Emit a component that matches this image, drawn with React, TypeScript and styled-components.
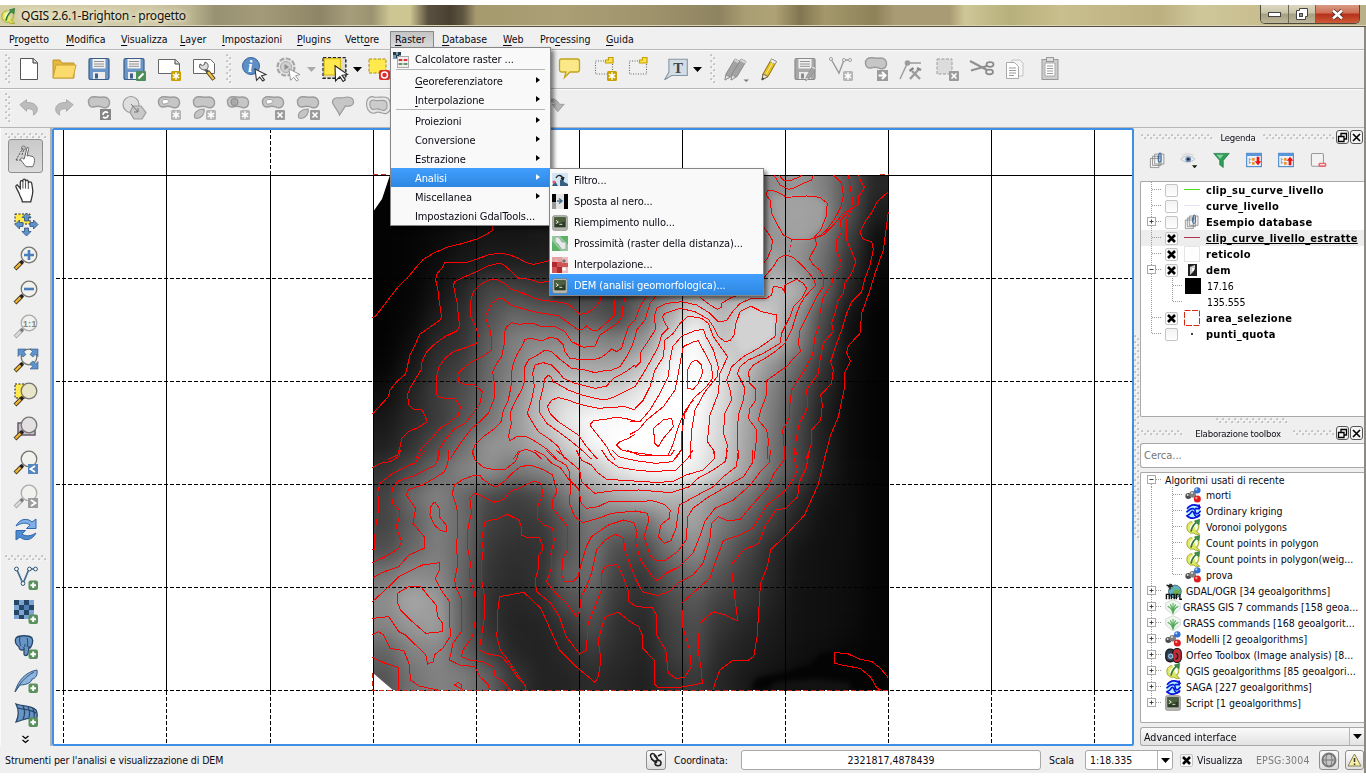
import React from "react";
import styled, { createGlobalStyle, css } from "styled-components";

const Global = createGlobalStyle`
  * { box-sizing: border-box; }
  html, body { margin: 0; padding: 0; background: #fff; overflow: hidden; }
  body { font-family: "DejaVu Sans Condensed", "DejaVu Sans", sans-serif; font-size: 10.5px; color: #0a0a14; }
  svg { display: block; overflow: visible; flex: none; }
`;

/* ---------- window frame ---------- */

const Desktop = styled.div`
  width: 1366px; height: 778px; padding: 5px 0; background: #fff; position: relative; overflow: hidden;
`;
const Window = styled.div`
  height: 768px; display: flex; flex-direction: column; background: #efefef; border-right: 2px solid #8d8a80;
`;
const TitleBar = styled.div`
  height: 22px; flex: none; display: flex; align-items: center; position: relative; padding-left: 0; margin-right: -2px;
  border-bottom: 1px solid #55503f;
  box-shadow: inset 0 -1px 0 #d9d3b8;
  background: linear-gradient(90deg, #d6d0a9 0, #cfc8a4 150px, #bdb691 190px, #989173 215px, #a39b78 260px, #8d8565 320px, #a69e7a 350px, #9a9270 372px, #cdc592 390px, #cdc592 410px, #5a5040 428px, #4a4032 450px, #5f5541 463px, #a5996e 476px, #ab9f76 560px, #9e936b 650px, #8e8460 720px, #a99d73 745px, #aea276 775px, #81764f 800px, #a3976b 825px, #8d8259 875px, #a99c74 895px, #a99c74 950px, #cfc796 965px, #b6b07c 1010px, #c9be8d 1060px, #bcb080 1160px, #cfc79a 1200px, #c9bf90 1250px, #b9b08a 1366px);
`;
const TitleText = styled.span`
  font: 12px "Noto Sans", sans-serif; letter-spacing: -0.24px; color: #111; margin-left: 5px; white-space: pre;
  text-shadow: 0 0 6px #fffbe0, 0 0 6px #fffbe0;
`;
const WinButtons = styled.div`
  margin-left: auto; margin-right: 6px; align-self: flex-start; height: 19px; display: flex;
  border: 1px solid #4d4a3c; border-top: 0; border-radius: 0 0 5px 5px; overflow: hidden;
`;
const WinButton = styled.div<{ $w: number; $close?: boolean }>`
  width: ${(p) => p.$w}px; display: flex; align-items: center; justify-content: center;
  border-right: ${(p) => (p.$close ? "0" : "1px solid #6b6754")};
  background: ${(p) => p.$close
    ? "linear-gradient(#d89a84 0, #cf6f55 45%, #b3301a 50%, #cf5a38 100%)"
    : "linear-gradient(#dcd8c0 0, #c9c4a8 45%, #a59f80 50%, #bdb698 100%)"};
`;
const MenuBar = styled.div`
  height: 22px; flex: none; display: flex; align-items: center; padding: 2px 0 0 2px; background: #f0f0f0;
`;
const MenuTitle = styled.div<{ $w: number; $open?: boolean }>`
  width: ${(p) => p.$w}px; height: 17px; line-height: 16px; white-space: nowrap; padding-left: 7px;
  u { text-underline-offset: 1.5px; }
  ${(p) => p.$open && css`
    width: 44px; margin: 0 ${p.$w - 45}px 0 2px; padding-left: 4px; border: 1px solid #8a8a8a; line-height: 14px;
    background: linear-gradient(#c4c4c4, #dadada);
  `}
`;
const Toolbar = styled.div`
  height: 39px; flex: none; display: flex; align-items: center; padding-left: 5px;
  border-top: 1px solid #b6b6b6; box-shadow: inset 0 1px 0 #fbfbfb; background: #efefef;
`;
const Tool = styled.div<{ $w: number }>`
  width: ${(p) => p.$w}px; display: flex; justify-content: center; flex: none;
`;
const Gap = styled.div<{ $w: number }>`width: ${(p) => p.$w}px; flex: none;`;
const Grip = styled.div<{ $len: number; $row?: boolean }>`
  flex: none;
  width: ${(p) => (p.$row ? p.$len : 6)}px; height: ${(p) => (p.$row ? 6 : p.$len)}px;
  background-image: radial-gradient(circle at 1.3px 1.3px, #c2c2c2 1px, transparent 1.3px), radial-gradient(circle at 4.3px 4.3px, #c2c2c2 1px, transparent 1.3px),
    radial-gradient(circle at 2.2px 2.2px, #fff 1px, transparent 1.3px), radial-gradient(circle at 5.2px 5.2px, #fff 1px, transparent 1.3px);
  background-size: 6px 6px;
`;
const Main = styled.div`
  height: 619px; flex: none; display: flex; border-top: 1px solid #b6b6b6;
`;
const SideBar = styled.div`
  width: 52px; flex: none; display: flex; flex-direction: column; align-items: center; padding-top: 5px;
  border-right: 2px solid #b2b2b2; border-left: 1px solid #fafafa;
`;
const SideTool = styled.div<{ $on?: boolean; $h?: number }>`
  width: 35px; height: ${(p) => p.$h ?? 34}px; display: flex; align-items: center; justify-content: center; flex: none;
  ${(p) => p.$on && css`border: 1px solid #8f8f8f; border-radius: 3px; background: linear-gradient(#c9c9c9, #dcdcdc);`}
`;
const SideBreak = styled.div`height: 14px; flex: none; padding-top: 8px;`;
const Chevrons = styled.div`padding-top: 3px;`;
const MapFrame = styled.div`
  width: 1082px; height: 618px; flex: none; border: 2px solid #3f8fe6; border-radius: 2px; background: #fff; overflow: hidden;
`;
const Splitter = styled.div`
  width: 6px; flex: none; display: flex; align-items: center; justify-content: center;
`;
const Dock = styled.div`
  width: 224px; flex: none; display: flex; flex-direction: column; padding-top: 1px;
`;
const DockTitle = styled.div`
  height: 16px; flex: none; display: flex; align-items: center; font-size: 9.5px; gap: 1px; padding-left: 1px;
`;
const DockName = styled.span<{ $w: number }>`
  width: ${(p) => p.$w}px; text-align: center; white-space: nowrap; letter-spacing: -0.2px;
`;
const DockButton = styled.div`
  width: 13px; height: 14px; border: 1px solid #555; border-radius: 3px; background: #f4f4f4; display: flex; align-items: center; justify-content: center;
`;
const LegendTools = styled.div`
  height: 30px; flex: none; display: flex; align-items: center; margin-bottom: 6px; padding-left: 1px;
`;
const Tree = styled.div<{ $h: number }>`
  height: ${(p) => p.$h}px; flex: none; background: #fff; border: 1px solid #a9a9a9; border-radius: 2px 0 0 2px; border-right: 0; overflow: hidden;
`;
const Row = styled.div<{ $on?: boolean; $h?: number }>`
  height: ${(p) => p.$h ?? 16}px; display: flex; align-items: center; white-space: nowrap; background: ${(p) => (p.$on ? "#ededed" : "transparent")};
`;
const Check = styled.div`
  width: 13px; height: 13px; flex: none; border: 1px solid #c4c4c4; border-radius: 2px; background: linear-gradient(#f2f2f2, #fff);
  display: flex; align-items: center; justify-content: center;
`;
const Symbol = styled.div`
  width: 28px; height: 16px; flex: none; display: flex; align-items: center; justify-content: center;
`;
const LayerName = styled.span<{ $under?: boolean; $plain?: boolean }>`
  font-size: ${(p) => (p.$plain ? 10.5 : 11)}px; font-weight: ${(p) => (p.$plain ? 400 : 700)}; color: #000;
  letter-spacing: ${(p) => (p.$plain ? -0.1 : 0.28)}px;
  padding-left: ${(p) => (p.$plain ? 2 : 0)}px; text-decoration: ${(p) => (p.$under ? "underline" : "none")};
`;
const AlgoIcon = styled.div<{ $w: number }>`
  width: ${(p) => p.$w}px; height: 16px; flex: none;
`;
const DockHandle = styled.div`
  height: 8px; flex: none; display: flex; align-items: center; justify-content: center;
`;
const Search = styled.div`
  height: 25px; flex: none; margin: 2px 0 4px; border: 1px solid #a9a9a9; border-right: 0; border-radius: 3px 0 0 3px; background: #fff; color: #777;
  font-size: 11px; line-height: 23px; padding-left: 3px;
`;
const Combo = styled.div`
  height: 19px; flex: none; margin-top: 4px; border: 1px solid #a9a9a9; border-right: 0; border-radius: 3px 0 0 3px; display: flex; align-items: center; padding-left: 3px;
  background: linear-gradient(#fafafa, #e2e2e2); font-size: 10.6px;
`;
const ComboArrow = styled.div`
  margin-left: auto; width: 15px; height: 100%; border-left: 1px solid #b5b5b5; display: flex; align-items: center; justify-content: center;
`;
const StatusBar = styled.div`
  height: 27px; flex: none; display: flex; align-items: center; padding: 1px 0 0 5px; background: #efefef; letter-spacing: -0.1px;
`;
const StatusText = styled.span<{ $w: number; $dim?: boolean }>`
  width: ${(p) => p.$w}px; flex: none; white-space: nowrap; color: ${(p) => (p.$dim ? "#7c7c7c" : "#0a0a14")};
  letter-spacing: ${(p) => (p.$dim ? 0.15 : -0.1)}px;
`;
const StatusButton = styled.div<{ $w?: number }>`
  width: ${(p) => p.$w ?? 20}px; height: 20px; flex: none; border: 1px solid #8e8e8e; border-radius: 3px; background: linear-gradient(#fbfbfb, #dedede);
  display: flex; align-items: center; justify-content: center;
`;
const Field = styled.div<{ $w: number; $left?: boolean }>`
  width: ${(p) => p.$w}px; height: 20px; flex: none; border: 1px solid #a8a8a8; border-radius: 3px; background: #fff; line-height: 19px; letter-spacing: 0;
  text-align: ${(p) => (p.$left ? "left" : "center")}; padding-left: ${(p) => (p.$left ? 4 : 0)}px; display: ${(p) => (p.$left ? "flex" : "block")};
`;

/* ---------- popup menus ---------- */

const Popup = styled.div<{ $x: number; $y: number; $w: number }>`
  position: absolute; left: ${(p) => p.$x}px; top: ${(p) => p.$y}px; width: ${(p) => p.$w}px;
  border: 1px solid #868686; background: #f9f9f9; box-shadow: 3px 3px 4px rgba(0, 0, 0, 0.5); color: #0a0a14; font-size: 11px; letter-spacing: -0.1px;
`;
const Entry = styled.div<{ $h: number; $on?: boolean }>`
  height: ${(p) => p.$h}px; display: flex; align-items: center; white-space: nowrap; padding: 2px 9px 0 2px;
  ${(p) => p.$on && css`background: linear-gradient(#429fff, #2d87e0); color: #fff;`}
  u { text-underline-offset: 1.5px; }
`;
const EntryIcon = styled.span<{ $w: number }>`width: ${(p) => p.$w}px; height: 16px; flex: none;`;
const EntryArrow = styled.span`margin-left: auto; width: 5px; padding-bottom: 3px;`;
const Rule = styled.div`height: 2px; margin: 0 5px; border-top: 1px solid #b5b5b5;`;

/* ---------- icons ---------- */

const G = "#9b9b9b";
const LG = "#c6c6c6";

const Svg = ({ s = 24, children }: { s?: number; children: React.ReactNode }) => (
  <svg width={s} height={s} viewBox="0 0 24 24" fill="none">{children}</svg>
);
const Star = ({ c = "#c9a000" }: { c?: string }) => (
  <g><rect x="14" y="14" width="10" height="10" rx="1.5" fill={c} />
    <path d="M19 15.3v7.4M15.8 17.1l6.4 3.8M22.2 17.1l-6.4 3.8" stroke="#fff" strokeWidth="1.5" /></g>
);
const Cross = () => (
  <g><rect x="14" y="14" width="10" height="10" rx="1" fill={G} /><path d="M16.5 16.5l5 5M21.5 16.5l-5 5" stroke="#fff" strokeWidth="1.7" /></g>
);
const Plus = () => (
  <g><rect x="14.5" y="14.5" width="9.5" height="9.5" rx="2" fill="#59905b" /><path d="M19.2 16.5v5.6M16.4 19.3h5.6" stroke="#fff" strokeWidth="2" /></g>
);
const Blob = ({ hole }: { hole?: boolean }) => (
  <g><path d="M1.500 6.500C1 2.500 4 .5 8 .8c4 .7 5 .7 8 .2 5-.2 7 3 6.500 6.800-.8 4-5 4.800-8 3C10.500 9.500 9 10.300 6.500 11 3.500 11.300 1.800 9.500 1.500 6.500z" fill={LG} stroke={G} strokeWidth="1.400" />
    {hole && <path d="M5 6c0-2 2-3 4.500-2.500s3.500 2 1 3.500S5 8.500 5 6z" fill="#fff" stroke={G} />}</g>
);
const Drop = () => <path d="M3 22c-2-4.500 2-9 9-9 1 4.500-3 11-9 9z" fill={LG} stroke={G} strokeWidth="1.200" />;
const Arrow = () => <path d="M13 12l11 5.500-4.500 1.300 3 4-1.800 1.300-3-4-3.200 3.200z" fill="#fff" stroke="#333" strokeWidth="1.100" />;
const Pencil = () => (
  <g><path d="M4 23l1-6 8.500-15 5 2.500L10 19.500z" fill="#e8c21e" stroke="#8a6d0a" strokeWidth="1" />
    <path d="M4 23l1-6 5 2.500z" fill="#e9e2c8" stroke="#555" strokeWidth=".8" /><path d="M4 23l.4-2.500 1.800 1z" fill="#333" /><path d="M13.500 2l5 2.500-1.500 2.500-5-2.500z" fill="#ececec" stroke="#999" strokeWidth=".7" /><path d="M8 17l7-12" stroke="#fff" strokeOpacity=".6" /></g>
);
const GreyPencil = ({ x }: { x: number }) => (
  <g transform={`translate(${x} 0)`}><path d="M4 23l1-6 9-15 5 2.500-9 15z" fill="#a3a3a3" stroke="#8a8a8a" strokeWidth="1" />
    <path d="M4 23l1-5 4 2z" fill="#e0e0e0" stroke="#8a8a8a" strokeWidth=".7" /><path d="M14 2l5 2.500-1 2-5-2.500z" fill="#d5d5d5" /></g>
);
const Lens = ({ dim, children, fill = "#f1f1ee" }: { dim?: boolean; children?: React.ReactNode; fill?: string }) => (
  <g>
    <path d="M1 23l7-7" stroke={dim ? "#a5a5a5" : "#403620"} strokeWidth="4" />
    <path d="M1.500 22.500l5-5" stroke={dim ? "#dcdcdc" : "#efb634"} strokeWidth="2.400" />
    <path d="M7 17l2-2" stroke={dim ? "#777" : "#222"} strokeWidth="3.200" />
    <circle cx="15" cy="9" r="7.800" fill={fill} stroke={dim ? "#aaa" : "#75756d"} strokeWidth="1.300" />
    {children}
  </g>
);
const Floppy = ({ c, e }: { c: string; e: string }) => (
  <g><rect x="2" y="1.500" width="20" height="21" rx="1.500" fill={c} stroke={e} strokeWidth="1.200" />
    <rect x="5.500" y="2" width="13" height="9.500" fill="#f1f1f1" /><path d="M7 4.500h10M7 7h10M7 9.300h10" stroke="#888" strokeWidth=".9" />
    <rect x="6" y="15" width="12" height="7" fill="#ececec" /><rect x="8" y="16.500" width="3" height="5" fill={e} /></g>
);
const Qgis = () => (
  <Svg s={16}>
    <path d="M11 4C5 4 2 9 3 14.500S9 22.500 13 21l3 2h6l-5-5" fill="#e3e86a" stroke="#a3a82c" strokeWidth="1.500" />
    <path d="M9.500 17C7 14 9 8 13 8" stroke="#fffff0" strokeWidth="2.400" />
    <path d="M9 19C10 13 13 8 17 5" stroke="#2f7d38" strokeWidth="2.600" /><path d="M14 3l8-2.500-1 9z" fill="#3d9145" stroke="#1d5f25" strokeWidth=".8" />
    <path d="M20 9c1 4 0 8-4 10" stroke="#b6bb3e" strokeWidth="2.400" />
  </Svg>
);
const Saga = () => (
  <Svg s={17}><circle cx="12" cy="12" r="10" fill="#aef4ff" /><path d="M3 8c5-7 14-7 19-1M21 16c-5 7-14 7-19 1" stroke="#0b13e0" strokeWidth="2.600" /><path d="M2 13c4-3 5-6 10-5 4 1 1 6 4 7s4-2 6-4M4 17c5-1 4-6 7-5s1 6 5 7 4-1 5-2M20 2v6h-6" stroke="#0b13e0" strokeWidth="2.300" /></Svg>
);
const Model = () => (
  <Svg s={16}><path d="M4 14l8-4 6-5M12 11l6 7" stroke="#666" strokeWidth="3" /><circle cx="5" cy="13.500" r="4.500" fill="#4d4d4d" /><circle cx="11.500" cy="11" r="5" fill="#7d7d7d" /><circle cx="18.500" cy="5" r="4.800" fill="#2f6fd6" /><circle cx="18.500" cy="18" r="5.300" fill="#e01c1c" /><circle cx="17" cy="3.500" r="1.700" fill="#bcd6ff" /><circle cx="17" cy="16.500" r="1.700" fill="#ff9c9c" /><circle cx="4" cy="12" r="1.500" fill="#ddd" /><circle cx="10.500" cy="9" r="1.600" fill="#ddd" /></Svg>
);
const Gdal = () => (
  <Svg s={17}><circle cx="14" cy="12" r="9" fill="#5cb3c9" stroke="#1c3a3f" /><path d="M8 8c4-4 7 1 5 3s-4 6 2 7 7-4 7-8" fill="#6fae4a" /><path d="M7 1v8M2 3l9 2M4 6l6-4" stroke="#222" strokeWidth="2" /><path d="M2 23v-7h4v7M9 23v-7h4v7M16 23v-7h3M21 16v7h3" stroke="#111" strokeWidth="2" /></Svg>
);
const Grass = () => (
  <Svg s={16}><path d="M1 6l11-5 11 5v9l-11 9L1 15z" fill="#eff6ef" stroke="#c3d0c3" /><path d="M12 22V6M12 22C11 16 8 13 4 11M12 22c1-6 4-9 8-11M12 19c-1-5-2-8-4-11M12 19c1-5 2-8 4-11" stroke="#55ab59" strokeWidth="1.600" /></Svg>
);
const Orfeo = () => (
  <Svg s={17}><rect x="1" y="3" width="13" height="18" rx="6" fill="#2b3b4d" stroke="#111" strokeWidth="1.500" /><rect x="11" y="2" width="12" height="20" rx="6" fill="#c62b38" stroke="#111" strokeWidth="1.500" /><circle cx="8" cy="13" r="4.500" fill="#9fc0dd" stroke="#222" /><circle cx="8" cy="13" r="2" fill="#3b6ea5" /><path d="M15 9c4 0 4 8 0 8" stroke="#222" strokeWidth="2" /></Svg>
);
const Terminal = () => (
  <Svg s={16}><rect x="1" y="1" width="22" height="22" rx="2.500" fill="#b8b9b0" stroke="#777" /><rect x="3.500" y="3.500" width="17" height="15" fill="#2b3b24" /><path d="M3.500 3.500h17v6l-17 5z" fill="#4b5f3f" /><path d="M6 8l3.500 2.500L6 13M11 14h4.500" stroke="#e8f0d8" strokeWidth="1.400" /></Svg>
);
const Pages = ({ s = 16 }: { s?: number }) => (
  <Svg s={s}><path d="M2 9h12v13H2zM5 6h12v13H5zM8 3h13v14H8z" fill="#f4f4f4" stroke="#888" strokeWidth="1.200" /><path d="M13 5v7c0 3 4 3 4 0V3c0-2-3-2-3 0v7" stroke="#37649c" strokeWidth="1.500" /></Svg>
);
const DownTri = ({ c = "#000" }: { c?: string }) => (
  <svg width="9" height="5" viewBox="0 0 9 5"><path d="M0 0h9L4.500 5z" fill={c} /></svg>
);
const Dotted = () => (
  <rect x="2.500" y="4" width="17" height="13" fill="#f0f0f0" stroke="#666" strokeWidth="1.100" strokeDasharray="1 1.500" />
);
const PinMark = () => <path d="M12.500 6V3h3V.5h4.500V6z" fill="#fbe34a" stroke="#c4a000" strokeWidth="1.200" />;

const icons: Record<string, React.ReactNode> = {
  file: <Svg><path d="M3.500 1.500h13l4 4v17h-17z" fill="#fff" stroke="#555" /><path d="M16 1.500v4.500h4.500" stroke="#333" fill="#ddd" /></Svg>,
  folder: <Svg><path d="M1 21V3h7l2 3h12v15z" fill="#e4b93a" stroke="#c0942a" /><path d="M1 21L4 8h20l-3 13z" fill="#fbdb6b" stroke="#caa036" /></Svg>,
  save: <Svg><Floppy c="#6b96c8" e="#3b5d88" /></Svg>,
  saveAs: <Svg><Floppy c="#6b96c8" e="#3b5d88" /><rect x="14" y="14" width="10" height="10" rx="1" fill="#4f8f57" /><path d="M16.500 21.500l5-5" stroke="#fff" strokeWidth="2" /></Svg>,
  composer: <Svg><path d="M1.500 2.500h17l4 4v10h-21z" fill="#fff" stroke="#666" /><path d="M18 2.500V7h4.500" stroke="#444" fill="#ddd" /><Star /></Svg>,
  manager: <Svg><path d="M1.500 2.500h17l4 4v10h-21z" fill="#fff" stroke="#666" /><path d="M12 11l4 4" stroke="#555" strokeWidth="3" /><path d="M8 7l2.500 1.500 2-1L13 5c3 1 4 4 2.500 6.500S9 13 7.500 10z" fill="#ddd" stroke="#555" /><path d="M15.500 14.500l6.500 8" stroke="#4a3b10" strokeWidth="4.200" /><path d="M16 15l5.500 7" stroke="#efc04a" strokeWidth="2.500" /></Svg>,
  info: <Svg><circle cx="9" cy="9" r="8.500" fill="#5d8ec6" stroke="#38659d" /><text x="6" y="14.500" fontFamily="Liberation Serif, serif" fontStyle="italic" fontWeight="700" fontSize="16" fill="#fff">i</text><Arrow /></Svg>,
  gear: <Svg><circle cx="10" cy="10" r="8.500" fill="#e4e4e4" stroke="#a5a5a5" strokeWidth="2.200" strokeDasharray="5 1.600" /><circle cx="10" cy="10" r="5.500" fill="#d0d0d0" stroke="#aaa" /><path d="M8.500 7l4.500 3-4.500 3z" fill="#8d8d8d" /><path d="M13 12l11 5.500-4.500 1.300 3 4-1.800 1.300-3-4-3.200 3.200z" fill="#fff" stroke="#999" /></Svg>,
  select: <Svg s={26}><rect x="1" y="1.500" width="21" height="19" fill="#dcdccf" stroke="#222" strokeWidth="1.300" strokeDasharray="3 1.500" /><rect x="2" y="2.500" width="15" height="15" fill="#ffe94d" stroke="#d9b90f" /><path d="M12 9l11.500 8-5 .8 3 4.200-2 1.500-3-4.500-4 4z" fill="#fff" stroke="#222" /></Svg>,
  deselect: <Svg><rect x="1" y="2" width="17" height="14" fill="#ffe94d" stroke="#a88d0c" strokeDasharray="3 1.500" /><rect x="11" y="13" width="11" height="10" rx="2" fill="#dd2c2c" /><circle cx="16.500" cy="18" r="3" stroke="#fff" strokeWidth="1.500" /></Svg>,
  tip: <Svg><path d="M4 2h16c2 0 2.500 1 2.500 2.500v8c0 2-1 2.500-2.500 2.500h-7l-5.500 5.500L9 15H5C3 15 2.500 14 2.500 12.500v-8C2.500 3 3 2 4 2z" fill="#fbe989" stroke="#c4a21a" strokeWidth="1.300" /></Svg>,
  newMark: <Svg><Dotted /><PinMark /><Star /></Svg>,
  marks: <Svg><Dotted /><PinMark /></Svg>,
  label: <Svg s={26}><path d="M4.500 3h17v15H7L.5 22l4-7z" fill="#d3dde6" stroke="#8595a3" /><text x="8.500" y="15.500" fontFamily="Liberation Serif, serif" fontWeight="700" fontSize="13.500" fill="#444">T</text></Svg>,
  pencils: <Svg><GreyPencil x={-3} /><GreyPencil x={3} /><path d="M19.500 22.500h5.500L22.200 25z" fill="#777" /></Svg>,
  pencil: <Svg><Pencil /></Svg>,
  saveEdit: <Svg><Floppy c="#a8a8a8" e="#8a8a8a" /><g transform="translate(10 8) scale(.68)"><GreyPencil x={0} /></g></Svg>,
  addNode: <Svg><path d="M2 2l8 14L15 3h6" stroke={G} strokeWidth="1.400" /><circle cx="2" cy="2" r="1.500" fill="#fff" stroke={G} /><circle cx="15" cy="3" r="1.500" fill="#fff" stroke={G} /><circle cx="21" cy="3" r="1.500" fill="#fff" stroke={G} /><Star c="#b5b5b5" /></Svg>,
  moveFeat: <Svg><Blob /><rect x="13" y="13" width="11" height="11" fill={G} /><path d="M14.500 18.500h6M18 15l3.500 3.500L18 22" stroke="#fff" strokeWidth="2" /></Svg>,
  nodeTool: <Svg><path d="M1 22L8.500 6H22" stroke={G} strokeWidth="1.400" /><circle cx="8.500" cy="6" r="2.800" fill={G} /><path d="M13 14l8 8M20 12l-9 10" stroke={G} strokeWidth="2.400" /><path d="M10.500 14l4-3M18 11l4 2" stroke="#8a8a8a" strokeWidth="2.400" /></Svg>,
  delSel: <Svg><rect x="2" y="2" width="15" height="15" fill="#dcdcdc" stroke={G} strokeDasharray="3 1.500" /><Cross /></Svg>,
  cut: <Svg><path d="M0 4l17 9M1 13.500l16-4.500" stroke="#909090" strokeWidth="2" /><ellipse cx="20" cy="7.500" rx="3.500" ry="2.300" stroke="#8a8a8a" strokeWidth="1.700" /><ellipse cx="19.500" cy="15" rx="3.500" ry="2.300" stroke="#8a8a8a" strokeWidth="1.700" /></Svg>,
  copy: <Svg><path d="M9 3h8l3 3v13H9z" fill="#f4f4f4" stroke="#c4c4c4" /><path d="M3.500 5.500h8l4 4v12h-12z" fill="#fff" stroke="#aaa" /><path d="M6 11h7M6 13.500h7M6 16h7M6 18.500h5" stroke="#999" /></Svg>,
  paste: <Svg><rect x="4" y="2.500" width="16" height="20" fill="#ccc" stroke="#999" /><path d="M7 6h10v13H7z" fill="#fff" stroke="#aaa" /><rect x="8.500" y=".5" width="7" height="4" fill="#ddd" stroke="#999" /><path d="M9 9h6M9 11.500h6M9 14h6M9 16.500h6" stroke="#999" /></Svg>,
  undo: <Svg s={20}><path d="M1 8l8-6v3.500c8-.5 13 3 13 8 0 3-2 6-5 7 2-6-2-8-8-7.500V16z" fill="#bcbcbc" stroke="#a2a2a2" /></Svg>,
  redo: <Svg s={20}><path d="M23 8l-8-6v3.500C7 5 2 8.500 2 13.500c0 3 2 6 5 7-2-6 2-8 8-7.500V16z" fill="#bcbcbc" stroke="#a2a2a2" /></Svg>,
  rotate: <Svg><Blob /><rect x="13" y="13" width="11" height="11" fill="#858585" /><path d="M21 17c-2-2-5-1-5 2M16 21c3 2 5 0 5-2" stroke="#fff" strokeWidth="1.700" /></Svg>,
  simplify: <Svg><circle cx="9" cy="8.500" r="8" fill="#dedede" stroke={G} strokeWidth="1.200" /><path d="M11 10h8l5 6.500-4 6.500h-8l-4-6.500z" fill="#c9c9c9" stroke={G} strokeWidth="1.200" /><path d="M9 8l7 8M16 12v4h-4" stroke="#777" /></Svg>,
  ring: <Svg><Blob hole /><Star c="#b5b5b5" /></Svg>,
  part: <Svg><Blob /><Drop /><Star c="#b5b5b5" /></Svg>,
  fillRing: <Svg><Blob /><circle cx="8.500" cy="6" r="3.600" fill="#aaa" stroke="#8a8a8a" /><Star c="#b5b5b5" /></Svg>,
  delRing: <Svg><Blob hole /><Cross /></Svg>,
  delPart: <Svg><Blob /><Drop /><Cross /></Svg>,
  reshape: <Svg><path d="M1.500 7C1 3 4 1.500 8 1.800c4 .5 5-.5 8-.8 5-.2 7 2.800 6.500 5.800-.8 3.500-5 3.700-8 3l-6 9.200c-1-3.500-4-6.500-7-12z" fill={LG} stroke={G} strokeWidth="1.200" /></Svg>,
  offset: <Svg s={26}><path d="M1.500 9C1 3 5 .5 9 2c4 1 12-3 14 4 1 6 1 9-3 11-4 1-6-2-9-1-4 2-9 0-9.500-7z" fill="#e5e5e5" stroke={G} /><path d="M4.500 9C4 5 7 4 10 5s9-2 10 2c1 4 0 6-2 7s-5-2-8-1-5 0-5.500-4z" fill="#ccc" stroke={G} /></Svg>,
  rotateSym: <Svg s={22}><path d="M0 9c4-9 13-9 17-1h5l-7 8-6-8h4C10 4 5 4 0 9z" fill="#b5b5b5" stroke="#9c9c9c" /></Svg>,
  touch: <Svg><path d="M8 11l2-6M2 16L9 4M2 16h5" stroke="#555" strokeDasharray="2 1" /><circle cx="9.500" cy="4" r="2" stroke="#777" /><path d="M13 3.500c1.500-.5 2 .5 1.500 2L13 12l2-.5 1.500.7 1.500 0 1.500 1 .7 1c.8 3 0 5.500-1.500 8.500H12c-2-3-4.500-5-5.500-7.500 0-1.700 2-1.700 3.500 0L10.500 14z" fill="#fff" stroke="#666" /></Svg>,
  hand: <Svg s={25}><path d="M6 15L3 9c-1-2 1-3 2-1.500L7 10V4c0-2 2.300-2 2.500 0V2.500C9.500.5 12 .5 12 2.500V3.500c0-2 2.500-2 2.700 0v1.700c0-2 3-1.800 3.300 0L19 12c0 5-1 6-2 11H9c0-3-2-4-3-8z" fill="#fff" stroke="#333" strokeWidth="1.200" /><path d="M9.500 4v6M12 4v6M14.700 5v5.500" stroke="#555" /></Svg>,
  panSel: <Svg><rect x="1" y="2" width="15" height="10" fill="#ffe94d" stroke="#222" strokeDasharray="2 1.500" /><path d="M12.500 1l4.500 4.500h-2.500V9h-4V5.500H8zM12.500 24L8 19.500h2.500V16h4v3.500H17zM1 12.500L5.500 8v2.500H9v4H5.500V17zM24 12.500L19.500 8v2.500H16v4h3.500V17z" fill="#5f93cd" stroke="#2d527f" strokeWidth=".8" /></Svg>,
  zoomIn: <Svg><Lens><path d="M15 4v10M10 9h10" stroke="#4a7fbd" strokeWidth="2.600" /></Lens></Svg>,
  zoomOut: <Svg><Lens><path d="M10 9h10" stroke="#4a7fbd" strokeWidth="2.600" /></Lens></Svg>,
  zoomNative: <Svg><Lens dim><text x="8.800" y="12.500" fontFamily="Liberation Sans, sans-serif" fontWeight="700" fontSize="9.500" fill="#888">1:1</text></Lens></Svg>,
  zoomFull: <Svg><Lens /><path d="M4 1h8l-2.500 2.500L12 6.500 9 9 6.500 6 4 8.500zM24 1h-8l2.500 2.500L16 6.500 19 9l2.500-3L24 8.500zM24 21h-8l2.500-2.500L16 15.500l3-2.500 2.500 3 2.500-2.500z" fill="#5f93cd" stroke="#315981" strokeWidth=".6" /></Svg>,
  zoomSel: <Svg><rect x="1" y="2" width="12" height="14" fill="#ffe94d" stroke="#222" strokeDasharray="2 1.500" /><Lens fill="#e9e5cb" /></Svg>,
  zoomLayer: <Svg><rect x="4" y="7" width="17" height="12" fill="#c9c0cc" stroke="#655b6a" strokeWidth="1.500" /><Lens fill="#e3e0e4" /></Svg>,
  zoomLast: <Svg><Lens /><rect x="14" y="14" width="10" height="10" fill="#5686be" /><path d="M21 16l-4.500 3L21 22" stroke="#fff" strokeWidth="1.800" /></Svg>,
  zoomNext: <Svg><Lens dim /><rect x="14" y="14" width="10" height="10" fill="#9c9c9c" /><path d="M17 16l4.500 3L17 22" stroke="#fff" strokeWidth="1.800" /></Svg>,
  refresh: <Svg><path d="M2 8C6 0 14 0 18 4l4-3v9.500h-9.500L16 7C12 4 7 5 2 8z" fill="#7fb0e6" stroke="#2f68ab" /><path d="M22 15c-4 8-12 8-16 4l-4 3v-9.500h9.500L8 16c4 3 9 2 14-1z" fill="#4e8bd0" stroke="#2f68ab" /></Svg>,
  addVector: <Svg><path d="M2.500 3L9 17.500 15 3h7" stroke="#456c92" strokeWidth="1.700" />{[[2.5, 3], [9, 17.5], [15.5, 3], [21.5, 3]].map(([x, y]) => <circle key={`${x}`} cx={x} cy={y} r="1.900" fill="#fff" stroke="#2d4f70" />)}<Plus /></Svg>,
  addRaster: <Svg><rect width="20" height="19" fill="#7aa5d2" /><path d="M0 0h5v5H0zM10 0h5v5h-5zM5 5h5v5H5zM15 5h5v5h-5zM0 10h5v5H0zM10 10h5v5h-5zM5 15h5v4H5z" fill="#274666" /><path d="M10 5h5v5h-5z" fill="#4f7fb5" /><Plus /></Svg>,
  addPg: <Svg><path d="M2 3c3-3 13-3 16 0 2 4-1 9-2 10l-1-1-1 7c-1 2-4 2-4 0v-5c-2 2-5 1-5-2C2 10 0 6 2 3z" fill="#6795c8" stroke="#274666" strokeWidth="1.300" /><path d="M6 2c-1 4 0 7 1 9M13 3c1 4 1 6 0 9M9 13c1-1 2-1 2-4" stroke="#274666" /><Plus /></Svg>,
  addLite: <Svg><path d="M1 23C4 11 12 3 23 1c1 5-2 9-5 9 0 3-5 6-12 6z" fill="#8db4de" stroke="#33587f" /><path d="M1 23C6 14 11 8 20 3" stroke="#33587f" /><Plus /></Svg>,
  addMssql: <Svg><path d="M2 1c8 3 14 1 20 6 2 4 1 8 0 10C15 13 9 17 2 19c3-6 3-12 0-18z" fill="#6795c8" stroke="#274666" strokeWidth="1.300" /><path d="M9 3c2 4 2 9 0 13M14 4c2 4 2 7 1 10.500M18.500 5c2 3 2 6 1.500 10M4 5c8 2 12 1 18 5" stroke="#274666" strokeWidth="1.200" /><Plus /></Svg>,
};

/* ---------- terrain map ---------- */

const shade = [
  [3, 5, 8, 10, 12, 15, 20, 25, 35, 50, 70, 90, 110, 125, 135, 140, 152, 128, 85, 38],
  [3, 5, 8, 12, 15, 18, 22, 28, 38, 55, 75, 95, 115, 130, 140, 150, 163, 138, 78, 28],
  [3, 5, 10, 18, 22, 22, 25, 32, 45, 60, 80, 100, 120, 135, 145, 150, 152, 118, 62, 14],
  [3, 5, 14, 25, 33, 33, 33, 40, 50, 60, 80, 105, 130, 140, 155, 165, 145, 108, 50, 10],
  [3, 6, 18, 38, 72, 70, 60, 60, 65, 65, 90, 130, 160, 160, 178, 188, 175, 98, 35, 6],
  [3, 8, 28, 48, 82, 105, 98, 92, 88, 72, 112, 172, 228, 182, 203, 200, 145, 74, 18, 4],
  [3, 14, 42, 52, 95, 128, 138, 140, 138, 130, 152, 215, 255, 195, 208, 190, 130, 65, 16, 4],
  [6, 25, 52, 66, 105, 130, 165, 172, 168, 170, 198, 248, 255, 225, 188, 145, 100, 50, 12, 4],
  [14, 36, 62, 78, 108, 142, 185, 215, 212, 212, 235, 255, 255, 222, 172, 128, 82, 38, 11, 4],
  [24, 42, 58, 84, 118, 152, 190, 230, 248, 250, 255, 255, 252, 215, 168, 122, 74, 30, 11, 4],
  [32, 50, 78, 112, 148, 150, 172, 205, 245, 255, 255, 255, 245, 212, 164, 116, 70, 30, 11, 4],
  [52, 78, 108, 132, 142, 118, 130, 158, 190, 225, 245, 250, 238, 204, 162, 114, 72, 30, 12, 5],
  [66, 108, 130, 104, 74, 62, 74, 118, 150, 168, 180, 182, 172, 146, 118, 82, 42, 20, 13, 5],
  [68, 94, 126, 108, 64, 56, 58, 88, 120, 112, 110, 148, 162, 124, 94, 62, 32, 17, 14, 5],
  [78, 104, 126, 104, 56, 48, 50, 84, 114, 78, 74, 116, 142, 104, 72, 42, 22, 16, 14, 5],
  [116, 138, 134, 100, 52, 44, 50, 98, 108, 66, 56, 90, 112, 84, 60, 38, 20, 16, 13, 5],
  [140, 168, 154, 96, 48, 38, 44, 80, 92, 56, 46, 74, 88, 66, 52, 34, 18, 16, 13, 5],
  [132, 152, 158, 96, 50, 35, 36, 52, 78, 48, 40, 64, 78, 52, 38, 28, 18, 16, 12, 5],
  [100, 130, 136, 100, 64, 38, 34, 42, 58, 44, 36, 60, 74, 42, 32, 24, 16, 13, 8, 5],
  [84, 115, 130, 124, 96, 54, 34, 36, 44, 38, 32, 48, 58, 38, 25, 18, 12, 16, 14, 10],
];

const northWest = [
  "383,18 383,32 360,45 335,57 295,70 245,82 205,100 175,118 155,140 128,173 100,200 75,232 50,265 30,290 22,293",
  "553,122 530,128 505,133 485,128 460,115 430,103 400,100 370,105 335,117 300,129 260,129 240,127 232,142 215,163 212,180 218,205 222,240 230,290 225,300 190,325 165,342 150,375 135,405 128,435 122,462 95,485 75,510 70,530 50,552 35,568 22,583",
  "553,185 520,187 495,178 460,174 440,155 415,133 400,130 370,138 335,155 300,170 270,184 265,195 270,220 277,250 280,290 284,318 275,333 240,350 205,375 185,395 172,420 168,450 150,480 135,505 127,525 132,555 145,568 172,570 187,605 160,622 130,635 110,655 105,680 98,705 70,718",
  "708,220 708,240 690,262 665,280 645,283 628,268 610,252 590,248 553,243 530,240 500,232 470,218 440,208 420,190 395,178 375,178 345,195 325,215 318,240 318,290 332,320 340,345 335,370 305,382 265,395 240,415 222,440 215,470 213,520 218,530 240,535 270,537 287,560 280,585 250,610 225,625 200,655 170,685 150,718",
  "752,225 748,255 748,285 725,308 700,330 685,333 665,318 650,330 640,330 605,305 580,287 555,283 520,278 480,268 440,256 415,237 400,235 380,250 360,290 375,330 380,360 380,390 355,408 320,425 295,445 277,462 282,485 295,493 330,495 352,515 345,550 325,580 300,610 270,625 240,660 222,690 218,718",
  "782,225 772,265 772,290 760,308 735,325 705,345 690,378 655,382 620,365 600,335 570,320 530,320 505,310 480,310 465,313 440,308 425,320 418,340 418,370 410,410 395,430 383,455 388,490 390,530 370,580 345,605 320,625 290,665 270,695 255,718",
  "810,300 790,320 780,350 770,385 755,395 740,387 725,400 710,412 685,420 640,418 615,415 600,395 595,375 575,355 555,352 530,363 500,355 480,358 470,380 455,405 445,430 440,455 438,500 430,540 415,570 408,605 390,625 355,650 330,675 322,700 330,718",
  "810,350 800,380 785,410 765,440 740,450 720,452 690,458 660,450 620,445 585,418 560,395 540,390 510,410 490,420 480,440 480,480 470,510 450,545 437,575 435,600 440,605 430,650 435,662 455,650 480,648 495,655 520,670 550,690 575,718",
  "810,435 790,450 765,465 745,475 725,498 690,505 660,497 630,490 595,475 580,455 560,435 535,428 510,435 503,460 508,500 500,540 487,580 495,595 520,635 550,655 580,680 600,718",
  "810,500 780,515 750,530 720,540 690,535 650,525 610,510 575,490 563,485 560,472 550,466 540,475 535,500 525,540 525,580 545,610 580,635 620,665 650,690 680,718",
  "810,570 780,560 740,562 700,565 665,558 635,550 610,540 580,533 560,540 547,560 555,580 580,605 610,625 640,645 665,680 690,710 700,718",
  "810,603 780,595 750,592 720,598 685,602 675,615 690,635 710,660 725,680 735,700 750,718",
  "810,643 790,655 765,665 755,675 770,690 800,697 810,698",
  "445,718 460,695 485,688 510,698 530,718",
];
const northEast = [
  "775,125 768,180 760,240 735,310 720,360 695,430 690,490 655,527 650,548 661,573 645,605 642,660 625,740 600,800 583,868",
  "775,65 740,97 725,128 705,155 690,185 698,207 725,215 730,240 720,285 705,325 695,365 665,395 650,430 635,480 620,520 602,575 610,600 605,640 572,675 577,705 572,750 545,780 545,820 528,868",
  "686,15 692,35 703,50 697,65 686,78 685,103 670,110 650,150 648,205 665,245 678,275 665,310 645,340 640,370 625,390 615,430 605,460 610,485 580,520 570,570 565,610 530,660 533,700 530,720 508,760 500,800 490,868",
  "655,15 662,60 668,90 665,115 630,152 635,185 620,210 620,245 632,270 635,285 612,310 605,345 580,380 570,430 570,460 555,500 548,555 520,605 485,660 480,700 480,740 458,780 460,800 465,868",
  "610,15 635,40 640,75 633,110 615,145 590,180 570,197 555,205 560,225 538,265 550,285 570,300 582,325 580,350 560,380 545,410 530,440 510,480 505,520 512,545 490,565 470,590 440,610 410,632 408,680 392,720 385,750 410,780 415,810 412,868",
  "665,115 640,130 615,160 580,195 550,206 520,210 485,208 460,195 440,160 425,130 420,90 408,75 412,63 425,60 450,70 470,82 530,78 570,82 592,100 588,140 572,180 550,206",
  "432,15 450,45 475,58 490,55 520,40 545,30 550,15",
  "447,15 460,30 480,32 510,20 515,15",
  "400,170 415,190 427,210 425,235 412,265 400,280",
  "400,325 430,290 445,265 465,255 490,262 520,290 550,325 557,345 525,380 510,405 500,430 485,480 465,520 435,545 405,565 370,585 355,605 360,640 375,655 378,690 360,715 355,745 380,780 378,820 372,868",
  "210,382 240,405 262,418 275,412 275,400 305,382 330,375",
  "465,365 465,345 500,328 520,340 530,355 515,385 490,410 480,440 455,490 450,520 400,550 355,570 330,590 322,610 345,655 340,690 325,735 322,790 325,868",
  "465,368 455,352 430,350 425,375 410,385 365,385 330,400 308,425 290,452 265,455 240,430 200,405 155,395 110,400 80,415 73,440 77,478 50,520 30,550 33,575 15,593",
  "362,408 395,425 440,435 435,500 385,535 340,560 305,590 290,630 300,660 305,690 285,730 280,790 292,825 288,868",
  "362,408 330,425 318,460 312,495 300,512 285,515 265,500 250,470 235,448 195,425 150,415 105,430 97,440 105,460 115,475 95,495 85,530 60,575 40,610 15,650",
  "15,715 40,690 60,650 75,600 100,560 105,510 130,490 150,460 175,438 215,445 235,460 250,500 293,560 270,610 265,670 240,735 232,815 250,840 255,868",
  "0,755 30,755 60,720 90,670 115,620 120,570 128,530 155,498 195,482 220,478 228,500 250,540 265,590 262,620 225,665 195,720 185,780 180,868",
  "0,793 25,780 50,750 100,710 135,660 145,610 152,570 160,530 190,515 205,512 225,550 245,590 248,625 225,655 190,685 165,730 155,790 155,840 135,868",
  "0,845 30,850 80,857 115,855 130,820 145,770 165,722 190,690",
  "185,575 200,570 215,585 217,610 205,640 190,658 172,655 172,600 185,575",
  "70,775 100,750 125,745 130,770 100,805 85,830 75,820 70,775",
  "15,450 30,410 50,378", "15,500 20,480 45,450 60,400 85,370",
];
const south = [
  "22,53 45,40 75,35 100,20 105,0",
  "180,0 160,20 150,38 110,55 75,75 45,100 38,125 40,180 30,240 28,298 22,300",
  "222,0 218,25 205,48 180,58 150,75 100,92 80,115 85,135 80,160 103,180 100,210 92,230 108,275 100,295 60,320 22,338",
  "248,0 245,40 235,65 205,85 170,105 130,118 122,135 150,175 142,220 175,260 175,295 130,315 100,350 50,368 22,385",
  "318,0 325,30 350,52 385,60 415,58 445,35 455,10 465,0",
  "500,0 530,15 550,38 580,55 600,85 632,118 640,160 655,175 690,170 720,155 800,155 850,152 885,163 903,180 900,205 875,225 868,260 885,280 905,272 920,235 925,200 930,165 975,140 1030,110 1060,80 1098,50 1105,0",
  "205,155 220,175 220,200 240,225 240,245 225,242 205,225 192,195 195,170 205,155",
  "368,720 365,705 340,680 325,650 280,645 250,630 260,580 285,545 285,445 270,415 265,390 275,340 270,290 275,240 272,175 258,130 265,105 290,88 320,77 340,75 345,85 375,107 390,110 415,92 435,70 460,50 490,45 530,60 555,75 560,95 568,125 555,150 555,175 600,230 600,300 585,325 582,375 590,395 615,395 630,380 640,340 655,290 670,260 720,225 765,210 795,218 805,245 800,275 815,330 850,380 865,392 890,370 930,350 970,310 990,260 1005,215 1035,175 1090,150 1140,105 1170,65 1195,40 1200,0",
  "535,0 560,25 595,45 605,65 608,110 605,160 620,200 645,218 690,205 730,190 800,183 835,190 840,210 825,260 845,320 865,333 890,330 925,305 950,270 955,200 970,175 1010,145 1060,115 1120,80 1145,40 1147,0",
  "430,720 410,695 385,680 380,650 350,635 310,630 285,620 290,600 318,560 328,500 325,430 308,380 312,340 303,290 305,230 315,190 310,145 325,130 360,145 385,157 410,148 430,125 465,110 500,93 520,100 527,135 510,170 510,205 530,225 555,235 560,270 550,310 553,350 537,395 560,425 600,465 625,498 635,485 640,440 655,410 670,370 685,300 710,270 740,253 765,265 768,300 785,345 800,385 820,425 865,437 900,425 925,400 970,375 1000,340 1020,270 1025,220 1045,200 1075,213 1110,208 1145,165 1190,115 1210,70 1240,30 1242,0",
  "475,720 475,708 450,680 430,650 405,620 365,612 338,600 352,510 355,450 345,390 345,340 350,300 345,270 355,215 390,207 420,193 455,210 462,230 462,255 480,262 515,262 525,285 525,300 512,320 512,360 503,390 508,425 550,460 575,500 595,560 635,612 655,600 660,520 680,470 700,420 700,370 710,350 745,343 760,370 778,420 780,455 805,470 850,473 862,495 862,555 890,600 897,670 920,685 945,683 965,650 960,600 940,530 937,460 975,425 1020,385 1035,340 1060,272 1110,255 1145,235 1165,205 1190,165 1240,125 1265,90 1280,60 1270,30 1280,0",
  "475,708 450,670 430,640 400,600 390,560 393,480 398,440 470,427 520,475 540,520 575,600 625,650 680,697 690,680 698,630 690,570 710,500 750,487 785,515 810,530 822,560 822,595 855,630 855,700 865,712 930,712 998,700 995,660 985,600 990,520 1030,485 1060,493 1103,513 1095,450 1083,345 1120,300 1165,280 1185,225 1215,180 1245,175 1280,140 1285,95 1305,55 1315,0",
  "1365,0 1355,45 1340,105 1320,150 1300,195 1250,250 1200,300 1190,350 1170,400 1165,480 1160,560 1150,620 1130,633 1085,633 1050,660 1035,700 1030,720",
  "775,0 810,15 880,18 905,15 915,0", "730,0 750,20 800,32 860,40 910,35 935,0", "700,0 720,30 750,52 800,60 850,65 920,60 955,25 970,0",
  "625,0 640,30 670,45 685,65 715,88 860,97 910,95 950,75 1000,60 1035,25 1032,0",
  "565,0 600,30 635,60 640,95 680,130 730,123 810,120 905,128 960,110 985,85 1030,60 1065,35 1072,0",
  "22,455 60,420 100,380 150,355 170,345 220,338 220,360 208,385 225,420 250,455 252,560 230,595 205,615 203,635 185,642 180,615 150,585 120,555 100,545 70,500 22,505",
  "95,430 130,410 165,410 185,435 210,465 215,500 230,520 230,545 180,550 140,515 105,480 95,455 95,430",
  "22,555 40,545 55,555 75,595 115,602 130,640 135,690 160,708 215,720", "22,622 60,640 98,652 100,720",
  "265,705 275,697 285,705 287,717 265,705",
  "1530,722 1515,715 1495,680 1465,655 1425,648 1390,640 1390,607 1430,612 1465,628 1500,635 1525,655 1548,683",
];

const CELL = 25.75;
const gridX = [63.5, 166.5, 270.5, 373.5, 476.5, 579.5, 682.5, 785.5, 888.5, 991.5, 1094.5];
const gridY = [278.5, 381.5, 484.5, 587.5, 690.5];

const Contours = ({ lines, t }: { lines: string[]; t: string }) => (
  <g transform={t}>{lines.map((p, i) => <polyline key={i} points={p} vectorEffect="non-scaling-stroke" />)}</g>
);

const TerrainMap = () => (
  <svg width="1078" height="614" viewBox="54 130 1078 614">
    <defs>
      <filter id="soft" x="-10%" y="-10%" width="120%" height="120%" colorInterpolationFilters="sRGB"><feGaussianBlur stdDeviation="9" /></filter>
      <filter id="slight" colorInterpolationFilters="sRGB"><feGaussianBlur stdDeviation="2.500" /></filter>
      <clipPath id="extent"><rect x="373" y="175" width="516" height="516" /></clipPath>
    </defs>
    <g clipPath="url(#extent)">
      <rect x="373" y="175" width="516" height="516" fill="#111" />
      <g filter="url(#soft)">
        {shade.map((row, r) => row.map((v, c) => {
          const left = c === 0 ? 40 : 0, top = r === 0 ? 40 : 0;
          return <rect key={`${r}-${c}`} x={373 + c * CELL - left} y={175 + r * CELL - top} fill={`rgb(${v},${v},${v})`}
            width={CELL + left + (c === 19 ? 40 : 0.5)} height={CELL + top + (r === 19 ? 40 : 0.5)} />;
        }))}
      </g>
      <g filter="url(#slight)">
        <path d="M752 308l12 4 12 5-2 20-14 9-18 8-8-20 4-16z" fill="#d2d2d2" />
        <path d="M772 197l40-2 14 8-3 24-15 12-18 0-12-14z" fill="#a3a3a3" opacity=".8" />
        <path d="M750 690l6-12 30-6 24-8 10-10 24-4 42 6v34z" fill="#040404" />
        <path d="M766 691l10-9 40-3 34 4v8z" fill="#131313" />
      </g>
      <path d="M373 175h17l-8 24-9 13zM373 673l21 18h-21z" fill="#fff" />
    </g>
    <g stroke="#000" shapeRendering="crispEdges">
      {gridX.map((x) => <path key={x} d={`M${x} ${x === 270.5 ? 175 : 129}V690.500`} />)}
      <path d="M270.500 129V175" strokeDasharray="4 2" />
      {gridX.map((x) => <path key={`low${x}`} d={`M${x} 690.500V746`} strokeDasharray="4 2" />)}
      <path d="M53 175.500H1133" />
      {gridY.map((y) => <path key={y} d={`M56 ${y}H1133`} strokeDasharray="4 2" />)}
    </g>
    <g fill="none" strokeWidth="1" shapeRendering="crispEdges">
      <path d="M393 690.500H888" stroke="#fff" strokeDasharray="3 9" />
      <path d="M372.500 673v17.500h516" stroke="#d42a12" strokeDasharray="5 3" />
      <path d="M373 174.500h16M880 174.500h9" stroke="#d42a12" strokeDasharray="5 3" />
    </g>
    <g fill="none" stroke="#ff0000" strokeWidth="1" shapeRendering="crispEdges">
      <Contours lines={northWest} t="translate(365 220) scale(.33333)" />
      <Contours lines={northEast} t="translate(630 170) scale(.33333)" />
      <Contours lines={south} t="translate(365 450) scale(.33803 .33333)" />
      <path d="M791.500 240l-3 15" strokeDasharray="2 3" />
    </g>
  </svg>
);

/* ---------- data ---------- */

const menus: [string, string, string, number][] = [
  ["P", "r", "ogetto", 57], ["", "M", "odifica", 55], ["", "V", "isualizza", 59], ["", "L", "ayer", 42], ["", "I", "mpostazioni", 75],
  ["", "P", "lugins", 48], ["Vett", "o", "re", 50], ["", "R", "aster", 46], ["", "D", "atabase", 61], ["", "W", "eb", 37], ["Pro", "c", "essing", 66], ["", "G", "uida", 50],
];

type Item = [string, number];
const topRow: Item[] = [
  ["file", 35], ["folder", 35], ["save", 35], ["saveAs", 35], ["composer", 35], ["manager", 35], ["|", 16], ["info", 33], ["gear", 35], ["v-", 12],
  ["select", 35], ["v", 10], ["deselect", 35], [" ", 154], ["tip", 35], ["newMark", 37], ["marks", 31], [" ", 7], ["label", 31], ["v", 10], [" ", 6], ["|", 10],
  ["pencils", 35], ["pencil", 33], ["saveEdit", 38], ["addNode", 34], ["moveFeat", 36], ["nodeTool", 34], ["delSel", 37], ["cut", 33], ["copy", 33], ["paste", 38],
];
const editRow: Item[] = [
  ["undo", 35], ["redo", 35], ["rotate", 35], ["simplify", 35], ["ring", 35], ["part", 35], ["fillRing", 34], ["delRing", 35], ["delPart", 35], ["reshape", 35],
  ["offset", 35], [" ", 145], ["rotateSym", 30],
];
const ToolRow = ({ items }: { items: Item[] }) => (
  <Toolbar>
    <Grip $len={30} />
    {items.map(([k, w], i) =>
      k === " " ? <Gap key={i} $w={w} /> :
      k === "|" ? <Tool key={i} $w={w}><Grip $len={30} /></Tool> :
      <Tool key={i} $w={w}>{k === "v" ? <DownTri /> : k === "v-" ? <DownTri c="#aaa" /> : icons[k]}</Tool>)}
  </Toolbar>
);

const ExBox = ({ x, open }: { x: number; open?: boolean }) => (
  <g><rect x={x - 3.5} y="3.500" width="8" height="8" fill="#fff" stroke="#aaa" /><path d={open ? `M${x - 1.5} 7.500h4` : `M${x - 1.5} 7.500h4M${x + 0.5} 5.500v4`} stroke="#444" /></g>
);
const Branch = ({ w, top = true, bottom = true, box, inner, open, reach }: {
  w: number; top?: boolean; bottom?: boolean; box?: boolean; inner?: "mid" | "end"; open?: boolean; reach?: number;
}) => (
  <svg width={w} height="16" viewBox={`0 0 ${w} 16`}>
    <g stroke="#9a9a9a" strokeDasharray="1 1" shapeRendering="crispEdges">
      <path d={`M10.500 ${top ? 0 : 8}V${bottom ? 16 : 8}`} />
      {inner ? <path d={`M31.500 0V${inner === "mid" ? 16 : 8}M32 7.500H${reach ?? w - 4}`} /> : <path d={`M11 7.500H${reach ?? 20}`} />}
    </g>
    {box && <ExBox x={10} open={open} />}
  </svg>
);
const X = () => <svg width="9" height="9" viewBox="0 0 9 9"><path d="M1 1l7 7M8 1L1 8" stroke="#000" strokeWidth="2.600" /></svg>;
const LineSym = ({ c }: { c: string }) => <svg width="16" height="2"><rect width="16" height="1" fill={c} /></svg>;

type Layer = { name: string; on?: boolean; sym: React.ReactNode; sel?: boolean; box?: boolean; open?: boolean };
const layers: Layer[] = [
  { name: "clip_su_curve_livello", sym: <LineSym c="#49e01a" /> },
  { name: "curve_livello", sym: <LineSym c="#e3e3f5" /> },
  { name: "Esempio database", sym: <Pages />, box: true },
  { name: "clip_curve_livello_estratte", sym: <LineSym c="#b03050" />, on: true, sel: true },
  { name: "reticolo", sym: <svg width="16" height="16"><rect x=".5" y=".5" width="15" height="15" fill="#fff" stroke="#e5e5e5" /></svg>, on: true },
  { name: "dem", sym: <svg width="9" height="12" viewBox="0 0 9 12"><rect width="9" height="12" fill="#222" /><path d="M2 3l2-1 3-1v4L5 8l-3 3z" fill="#ccc" /><path d="M4 4h2v3H4z" fill="#fff" /></svg>, on: true, box: true, open: true },
];
const lowerLayers: Layer[] = [
  { name: "area_selezione", sym: <svg width="16" height="16"><rect x=".5" y=".5" width="15" height="15" fill="#fff" stroke="#d42a12" strokeDasharray="6 1.500" /></svg>, on: true },
  { name: "punti_quota", sym: <svg width="2" height="2"><rect width="2" height="2" fill="#444" /></svg> },
];
const LayerRow = ({ l, last }: { l: Layer; last?: boolean }) => (
  <Row $on={l.sel}>
    <Branch w={24} bottom={!last} box={l.box} open={l.open} />
    <Check>{l.on && <X />}</Check>
    <Symbol>{l.sym}</Symbol>
    <LayerName $under={l.sel}>{l.name}</LayerName>
  </Row>
);

const recent: [React.ReactNode, string][] = [
  [<Model />, "morti"], [<Saga />, "Ordinary kriging"], [<Qgis />, "Voronoi polygons"], [<Qgis />, "Count points in polygon"], [<Qgis />, "Count points in polygon(weig..."], [<Model />, "prova"],
];
const providers: [React.ReactNode, string, number][] = [
  [<Gdal />, "GDAL/OGR [34 geoalgorithms]", 21], [<Grass />, "GRASS GIS 7 commands [158 geoa...", 18], [<Grass />, "GRASS commands [168 geoalgorit...", 18],
  [<Model />, "Modelli [2 geoalgorithms]", 21], [<Orfeo />, "Orfeo Toolbox (Image analysis) [8...", 21], [<Qgis />, "QGIS geoalgorithms [85 geoalgori...", 21],
  [<Saga />, "SAGA [227 geoalgorithms]", 21], [<Terminal />, "Script [1 geoalgorithms]", 21],
];

const FloatBtn = () => <DockButton><svg width="9" height="9" viewBox="0 0 9 9" fill="none" stroke="#000"><path d="M3 3V.5h5.500V6H6" strokeWidth="1.300" /><path d="M.5 3.500H6v5H.5z" strokeWidth="1.300" /></svg></DockButton>;
const CloseBtn = () => <DockButton><svg width="9" height="9" viewBox="0 0 9 9"><path d="M1 1l7 7M8 1L1 8" stroke="#000" strokeWidth="1.600" /></svg></DockButton>;

const Tab = ({ up }: { up?: boolean }) => (
  <Svg s={16}><rect x="1" y="2" width="22" height="20" fill="#e9f1fb" stroke="#3f7cc4" strokeWidth="1.500" /><rect x="1" y="2" width="22" height="4" fill="#5a95da" /><path d="M5 9v9M5 11h3M5 16h3" stroke="#888" /><path d="M9 9h4v4H9zM9 15h4v4H9z" fill="#f0932b" /><path d={up ? "M18 7l5 6h-3v7h-4v-7h-3z" : "M18 20l5-6h-3V7h-4v7h-3z"} fill="#e81212" /></Svg>
);
const legendIcons: React.ReactNode[] = [
  <Pages s={17} />,
  <Svg s={18}><path d="M1 11c5-6 13-6 19 0-6 5-14 5-19 0z" fill="#e8edf2" stroke="#aab4bc" /><circle cx="11" cy="11" r="3.800" fill="#6b8db3" /><circle cx="11" cy="11" r="1.700" fill="#223" /><path d="M3 6c5-3 10-3 15 0" stroke="#c4c4c4" /><path d="M16 19h7l-3.500 4z" fill="#111" /></Svg>,
  <Svg s={17}><path d="M1 2h22l-8.500 10v10l-5-4v-6z" fill="#2f9d58" stroke="#1f7a41" /><path d="M5 4h10l-5 6z" fill="#86d19f" /></Svg>,
  <Tab />, <Tab up />,
  <Svg s={17}><rect x="2" y="2" width="17" height="18" rx="2" fill="#f2f2f2" stroke="#999" strokeWidth="1.500" /><rect x="12" y="15" width="11" height="6" rx="2" fill="#e8636a" /><path d="M14 18h7" stroke="#fff" strokeWidth="1.500" /></Svg>,
];

const sideTop = ["touch", "hand", "panSel", "zoomIn", "zoomOut", "zoomNative", "zoomFull", "zoomSel", "zoomLayer", "zoomLast", "zoomNext", "refresh"];
const sideBottom = ["addVector", "addRaster", "addPg", "addLite", "addMssql"];

const Tri = ({ c = "#000" }: { c?: string }) => <svg width="4" height="6" viewBox="0 0 4 6"><path d="M0 0l4 3-4 3z" fill={c} /></svg>;
const CalcIcon = () => (
  <svg width="17" height="17" viewBox="0 0 17 17"><path d="M0 0h8v7H0z" fill="#7a98ad" /><path d="M0 0h3v3H0zM5 0h3v3H5zM3 3h3v3H3z" fill="#223a4d" /><rect x="4.500" y="4.500" width="11" height="11" fill="#f3ecec" stroke="#aaa" /><path d="M5 8h10M5 12h10" stroke="#999" /><path d="M6 7h3v2H6zM11 7h3v2h-3z" fill="#d33" /><path d="M6 11h3v2H6zM11 11h3v2h-3z" fill="#5a9a6a" /></svg>
);
const subIcons: React.ReactNode[] = [
  <svg width="16" height="15" viewBox="0 0 16 15"><rect width="16" height="13" fill="#d3e6f5" /><path d="M0 13l3-5 3 5zM8 13V7l3-1 1 3 4 2v2z" fill="#35607d" /><path d="M4 5c2-4 6-3 7 1M11 7l-2-2M11 7l1-3" stroke="#222" strokeWidth="1.300" fill="none" /><circle cx="2" cy="9" r="1.500" fill="#e56" /></svg>,
  <svg width="16" height="15" viewBox="0 0 16 15"><rect width="16" height="15" fill="#e3e3e3" /><path d="M0 0h4v8H0zM12 0h4v15h-4z" fill="#000" /><path d="M0 8h4v7H0z" fill="#999" /><path d="M5 7h4M7 4.500L10 7 7 9.500" stroke="#45708f" strokeWidth="1.500" fill="none" /></svg>,
  <Terminal />,
  <svg width="16" height="15" viewBox="0 0 16 15"><rect width="16" height="15" fill="#8fcf93" /><path d="M0 5l9 10H0zM8 0h8v9z" fill="#3f9d4c" opacity=".6" /><path d="M3 1h4l3 5h4v7l-4 1-4-6-3-2z" fill="#e6e9e6" stroke="#9aa" /></svg>,
  <svg width="16" height="16" viewBox="0 0 16 16"><rect width="16" height="16" fill="#cf5557" /><path d="M0 0h10v5H0z" fill="#e0a0a0" /><path d="M0 5h5v5H0zM5 10h5v6H5z" fill="#b02a2d" /><path d="M10 0h6v6h-6zM10 10h6v6h-6z" fill="#eebcbc" /><circle cx="4" cy="3.500" r="1.500" fill="#faa" /><circle cx="12" cy="4" r="1.800" fill="#777" /><circle cx="12" cy="12" r="1.800" fill="#fff" /></svg>,
  <Terminal />,
];
const subEntries = ["Filtro...", "Sposta al nero...", "Riempimento nullo...", "Prossimità (raster della distanza)...", "Interpolazione...", "DEM (analisi geomorfologica)..."];

export default function App() {
  return (
    <Desktop>
      <Global />
      <Window>
        <TitleBar>
          <Qgis />
          <TitleText>QGIS 2.6.1-Brighton - progetto</TitleText>
          <WinButtons>
            <WinButton $w={28}><svg width="13" height="5"><rect x=".5" y=".5" width="12" height="4" fill="#fff" stroke="#444" /></svg></WinButton>
            <WinButton $w={27}><svg width="12" height="12" fill="#fff" stroke="#444"><path d="M3.500.5h8v8h-2v3h-9v-9h3z" /><rect x="3.500" y="5.500" width="3" height="3" fill="#999" /></svg></WinButton>
            <WinButton $w={43} $close><svg width="13" height="11" viewBox="0 0 13 11"><path d="M2 1.500l9 8M11 1.500l-9 8" stroke="#4a2a22" strokeWidth="4.200" /><path d="M2 1.500l9 8M11 1.500l-9 8" stroke="#fff" strokeWidth="2.600" /></svg></WinButton>
          </WinButtons>
        </TitleBar>
        <MenuBar>
          {menus.map(([a, u, b, w]) => <MenuTitle key={a + u + b} $w={w} $open={b === "aster"}>{a}<u>{u}</u>{b}</MenuTitle>)}
        </MenuBar>
        <ToolRow items={topRow} />
        <ToolRow items={editRow} />
        <Main>
          <SideBar>
            <Grip $row $len={42} />
            {sideTop.map((k, i) => <SideTool key={k} $on={i === 0}>{icons[k]}</SideTool>)}
            <SideBreak><Grip $row $len={42} /></SideBreak>
            {sideBottom.map((k) => <SideTool key={k} $h={34.3}>{icons[k]}</SideTool>)}
            <Chevrons><svg width="7" height="9" viewBox="0 0 7 9" fill="none" stroke="#000" strokeWidth="1.300"><path d="M.5 1l3 2.500L6.500 1M.5 5l3 2.500L6.500 5" /></svg></Chevrons>
          </SideBar>
          <MapFrame><TerrainMap /></MapFrame>
          <Splitter><Grip $len={204} /></Splitter>
          <Dock>
            <DockTitle>
              <Grip $row $len={72} /><DockName $w={48}>Legenda</DockName><Grip $row $len={72} /><FloatBtn /><CloseBtn />
            </DockTitle>
            <LegendTools>{legendIcons.map((ic, i) => <Tool key={i} $w={32.3}>{ic}</Tool>)}</LegendTools>
            <Tree $h={236}>
              {layers.map((l) => <LayerRow key={l.name} l={l} />)}
              <Row><Branch w={44} inner="mid" reach={41} /><svg width="16" height="16"><rect width="16" height="16" fill="#000" /></svg><Gap $w={4} /><LayerName $plain>17.16</LayerName></Row>
              <Row><Branch w={44} inner="end" reach={41} /><Gap $w={20} /><LayerName $plain>135.555</LayerName></Row>
              {lowerLayers.map((l, i) => <LayerRow key={l.name} l={l} last={i === 1} />)}
            </Tree>
            <DockHandle><Grip $row $len={72} /></DockHandle>
            <DockTitle>
              <Grip $row $len={42} /><DockName $w={108}>Elaborazione toolbox</DockName><Grip $row $len={42} /><FloatBtn /><CloseBtn />
            </DockTitle>
            <Search>Cerca...</Search>
            <Tree $h={251}>
              <Row $h={14}><Branch w={24} top={false} box open /><span>Algoritmi usati di recente</span></Row>
              {recent.map(([ic, t], i) => <Row key={t}><Branch w={44} inner={i === 5 ? "end" : "mid"} reach={41} /><AlgoIcon $w={21}>{ic}</AlgoIcon><span>{t}</span></Row>)}
              {providers.map(([ic, t, w], i) => <Row key={t}><Branch w={24} bottom={i < 7} box /><AlgoIcon $w={w}>{ic}</AlgoIcon><span>{t}</span></Row>)}
            </Tree>
            <Combo>Advanced interface<ComboArrow><DownTri /></ComboArrow></Combo>
          </Dock>
        </Main>
        <StatusBar>
          <StatusText $w={641}>Strumenti per l'analisi e visualizzazione di DEM</StatusText>
          <StatusButton><svg width="14" height="14" viewBox="0 0 14 14" fill="none" stroke="#222" strokeWidth="1.500"><ellipse cx="5" cy="4.500" rx="2.500" ry="4.500" transform="rotate(-35 5 4.500)" /><ellipse cx="9" cy="10" rx="3" ry="2.800" /><path d="M2 6l6 4M5 2l5 6M9 3l4-2" /></svg></StatusButton>
          <Gap $w={8} /><StatusText $w={67}>Coordinata:</StatusText>
          <Field $w={300}>2321817,4878439</Field>
          <Gap $w={8} /><StatusText $w={36}>Scala</StatusText>
          <Field $w={88} $left>1:18.335<ComboArrow><DownTri /></ComboArrow></Field>
          <Gap $w={7} /><Check><X /></Check><Gap $w={4} />
          <StatusText $w={59}>Visualizza</StatusText>
          <StatusText $w={63} $dim>EPSG:3004</StatusText>
          <StatusButton><svg width="16" height="16" viewBox="0 0 16 16" fill="#c6c6c6" stroke="#777"><circle cx="8" cy="8" r="6.500" strokeWidth="2" /><ellipse cx="8" cy="8" rx="3" ry="6.500" fill="none" /><path d="M1.500 8h13" /></svg></StatusButton>
          <Gap $w={6} />
          <StatusButton $w={19}><svg width="15" height="14" viewBox="0 0 15 14"><path d="M7.500 1L14 13H1z" fill="#f7efa4" stroke="#85805a" /><path d="M7.500 5v4M7.500 10.500v1.500" stroke="#333" strokeWidth="1.500" /></svg></StatusButton>
        </StatusBar>
      </Window>

      <Popup $x={390} $y={47} $w={161}>
        <Entry $h={21}><EntryIcon $w={22}><CalcIcon /></EntryIcon>Calcolatore raster ...</Entry>
        <Rule />
        <Entry $h={19}><EntryIcon $w={22} /><span><u>G</u>eoreferenziatore</span><EntryArrow><Tri /></EntryArrow></Entry>
        <Entry $h={19}><EntryIcon $w={22} /><span><u>I</u>nterpolazione</span><EntryArrow><Tri /></EntryArrow></Entry>
        <Rule />
        {["Proiezioni", "Conversione", "Estrazione", "Analisi", "Miscellanea"].map((t) => (
          <Entry key={t} $h={19} $on={t === "Analisi"}><EntryIcon $w={22} />{t}<EntryArrow><Tri c={t === "Analisi" ? "#fff" : "#000"} /></EntryArrow></Entry>
        ))}
        <Entry $h={19}><EntryIcon $w={22} />Impostazioni GdalTools...</Entry>
      </Popup>
      <Popup $x={549} $y={168} $w={215}>
        {subEntries.map((t, i) => <Entry key={t} $h={21} $on={i === 5}><EntryIcon $w={22}>{subIcons[i]}</EntryIcon>{t}</Entry>)}
      </Popup>
    </Desktop>
  );
}
